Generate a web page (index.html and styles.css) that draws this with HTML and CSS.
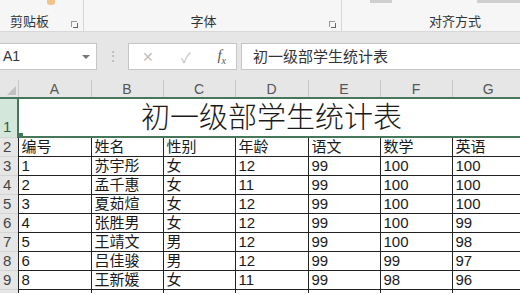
FILE: index.html
```html
<!DOCTYPE html>
<html lang="zh-CN">
<head>
  <meta charset="UTF-8">
  <title>初一级部学生统计表</title>
  <link rel="stylesheet" href="styles.css">
</head>
<body>
  <div class="ribbon">
    <div class="group clip">
      <div class="tops"><span class="paste"></span></div>
      <div class="glabel">剪贴板</div>
      <span class="launch"></span>
    </div>
    <div class="group font">
      <div class="tops"></div>
      <div class="glabel">字体</div>
      <span class="launch"></span>
    </div>
    <div class="group align">
      <div class="tops"><span class="bar b1"></span><span class="bar b2"></span></div>
      <div class="glabel">对齐方式</div>
    </div>
  </div>

  <div class="fbar">
    <div class="namebox">A1<span class="drop"></span></div>
    <div class="dots">⋮</div>
    <div class="fbtns">
      <span class="fb x">✕</span>
      <span class="fb ok">✓</span>
      <span class="fb fx">f<sub>x</sub></span>
    </div>
    <div class="finput">初一级部学生统计表</div>
  </div>

  <table class="sheet">
    <colgroup>
      <col class="c-h"><col class="c-a"><col class="c-b"><col class="c-c"><col class="c-d"><col class="c-e"><col class="c-f"><col class="c-g">
    </colgroup>
    <tr class="colhead">
      <th class="corner"><span class="tri"></span></th>
      <th>A</th><th>B</th><th>C</th><th>D</th><th>E</th><th>F</th><th>G</th>
    </tr>
    <tr class="r1">
      <th class="rh sel">1</th>
      <td colspan="7" class="title">初一级部学生统计表<span class="handle"></span></td>
    </tr>
    <tr>
      <th class="rh">2</th><td>编号</td><td>姓名</td><td>性别</td><td>年龄</td><td>语文</td><td>数学</td><td>英语</td>
    </tr>
    <tr>
      <th class="rh">3</th><td>1</td><td>苏宇彤</td><td>女</td><td>12</td><td>99</td><td>100</td><td>100</td>
    </tr>
    <tr>
      <th class="rh">4</th><td>2</td><td>孟千惠</td><td>女</td><td>11</td><td>99</td><td>100</td><td>100</td>
    </tr>
    <tr>
      <th class="rh">5</th><td>3</td><td>夏茹煊</td><td>女</td><td>12</td><td>99</td><td>100</td><td>100</td>
    </tr>
    <tr>
      <th class="rh">6</th><td>4</td><td>张胜男</td><td>女</td><td>12</td><td>99</td><td>100</td><td>99</td>
    </tr>
    <tr>
      <th class="rh">7</th><td>5</td><td>王靖文</td><td>男</td><td>12</td><td>99</td><td>100</td><td>98</td>
    </tr>
    <tr>
      <th class="rh">8</th><td>6</td><td>吕佳骏</td><td>男</td><td>12</td><td>99</td><td>99</td><td>97</td>
    </tr>
    <tr>
      <th class="rh">9</th><td>8</td><td>王新媛</td><td>女</td><td>11</td><td>99</td><td>98</td><td>96</td>
    </tr>
    <tr>
      <th class="rh"></th><td></td><td></td><td></td><td></td><td></td><td></td><td></td>
    </tr>
  </table>
</body>
</html>
```

FILE: styles.css
```css
body {
  margin: 0;
  width: 520px;
  height: 293px;
  overflow: hidden;
  background: #e6e6e6;
  font-family: "Liberation Sans", "Noto Sans CJK SC", sans-serif;
  color: #222;
}

/* ribbon */
.ribbon {
  display: flex;
  height: 32px;
  background: #f6f6f6;
  border-bottom: 1px solid #d8d8d8;
  box-sizing: border-box;
}
.group {
  position: relative;
  display: flex;
  flex-direction: column;
  justify-content: space-between;
  border-right: 1px solid #d6d6d6;
  box-sizing: border-box;
}
.clip { width: 84px; }
.font { width: 258px; }
.align { flex: 1; border-right: none; }
.tops {
  position: relative;
  height: 8px;
}
.glabel {
  font-size: 13px;
  color: #333;
  text-align: center;
  line-height: 16px;
  padding-bottom: 1px;
}
.clip .glabel { text-align: left; padding-left: 10px; }
.font .glabel { padding-right: 18px; }
.align .glabel { padding-left: 48px; }
.paste {
  position: absolute;
  left: 47px;
  top: 0;
  width: 8px;
  height: 5px;
  background: #f2c38a;
  border-radius: 0 0 3px 3px;
}
.bar {
  position: absolute;
  top: 0;
  height: 3px;
  background: #cfcfcf;
}
.b1 { left: 28px; width: 22px; }
.b2 { left: 135px; width: 50px; }
.launch {
  position: absolute;
  right: 6px;
  bottom: 4px;
  width: 5px;
  height: 5px;
  border-left: 1px solid #999;
  border-top: 1px solid #999;
}
.launch::after {
  content: "";
  position: absolute;
  left: 1px;
  top: 1px;
  width: 4px;
  height: 4px;
  border-right: 1px solid #666;
  border-bottom: 1px solid #666;
}

/* formula bar */
.fbar {
  display: flex;
  height: 27px;
  margin: 11px 0 10px;
}
.namebox {
  position: relative;
  width: 97px;
  background: #fff;
  border: 1px solid #c6c6c6;
  border-left: none;
  box-sizing: border-box;
  font-size: 14px;
  line-height: 25px;
  padding-left: 3px;
  color: #333;
}
.drop {
  position: absolute;
  right: 6px;
  top: 11px;
  border-left: 4px solid transparent;
  border-right: 4px solid transparent;
  border-top: 4px solid #777;
}
.dots {
  width: 31px;
  text-align: center;
  color: #b5b5b5;
  font-size: 14px;
  line-height: 27px;
}
.fbtns {
  display: flex;
  align-items: center;
  justify-content: space-between;
  width: 109px;
  padding: 0 10px 0 13px;
  background: #fff;
  border: 1px solid #c6c6c6;
  box-sizing: border-box;
}
.fb {
  color: #bdbdbd;
  font-size: 14px;
}
.fx {
  font-family: "Liberation Serif", serif;
  font-style: italic;
  color: #555;
  font-size: 15px;
}
.fx sub { font-size: 10px; }
.finput {
  flex: 1;
  margin-left: 4px;
  background: #fff;
  border: 1px solid #c6c6c6;
  border-right: none;
  font-size: 15px;
  line-height: 25px;
  padding-left: 11px;
  color: #333;
}

/* sheet */
.sheet {
  border-collapse: collapse;
  table-layout: fixed;
  width: 600px;
  background: #fff;
  font-size: 15px;
}
.c-h { width: 18px; }
.c-a { width: 73px; }
.c-b { width: 72px; }
.c-c { width: 72px; }
.c-d { width: 73px; }
.c-e { width: 72px; }
.c-f { width: 72px; }
.c-g { width: 148px; }
.colhead th {
  height: 17px;
  padding: 0 76px 0 0;
  background: #e6e6e6;
  color: #555;
  font-weight: normal;
  font-size: 14px;
  border-left: 1px solid #c9c9c9;
  border-bottom: 2px solid #46775a;
}
.colhead th:not(:last-child) { padding: 0; }
.colhead .corner {
  position: relative;
  border-left: none;
}
.tri {
  position: absolute;
  right: 2px;
  bottom: 2px;
  border-left: 9px solid transparent;
  border-bottom: 9px solid #c2c2c2;
}
.rh {
  padding: 0 0 0 3px;
  background: #e6e6e6;
  color: #444;
  font-weight: normal;
  text-align: left;
  font-size: 15px;
  border-top: 1px solid #d4d4d4;
  border-right: 1px solid #222;
}
.rh.sel {
  background: #d3e7da;
  color: #2f5f42;
  border-right: 2px solid #46775a;
  vertical-align: bottom;
  padding-bottom: 2px;
}
.title {
  position: relative;
  text-align: center;
  color: #1a1a1a;
}
.handle {
  position: absolute;
  left: -2px;
  bottom: -3px;
  width: 5px;
  height: 5px;
  background: #46775a;
  border: 1px solid #fff;
}
.sheet tr { height: 19px; }
.sheet tr.r1 { height: 39px; }
.sheet tr.colhead { height: 18px; }
.sheet td {
  padding: 0 0 0 3px;
  border: 1px solid #222;
  line-height: 17px;
  color: #1a1a1a;
  white-space: nowrap;
  overflow: hidden;
}
.sheet td.title {
  border: none;
  border-bottom: 2px solid #46775a;
  padding: 2px 76px 0 0;
  line-height: 35px;
  font-size: 29px;
  font-weight: 300;
}
```
